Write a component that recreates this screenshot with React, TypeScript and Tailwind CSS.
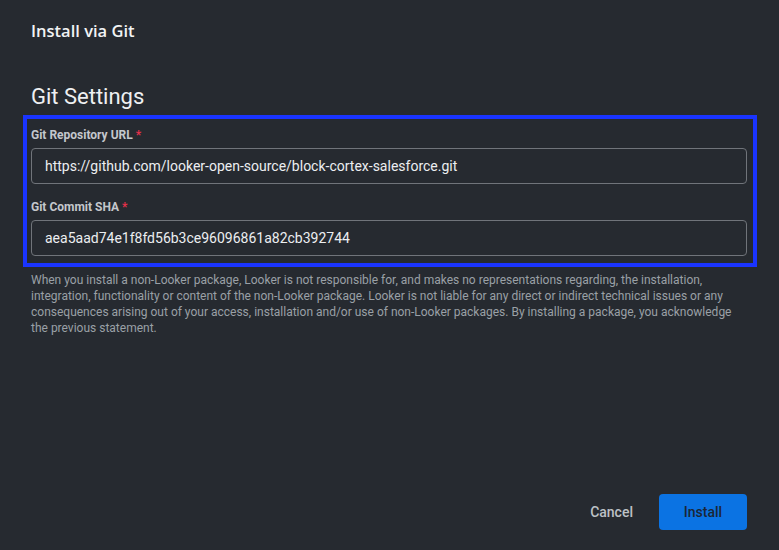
import React from 'react';

const FONT = { fontFamily: 'Roboto, "Open Sans", Arial, sans-serif' };

function Field({ label, value }: { label: string; value: string }) {
    return (
        <div className="flex flex-col">
            <label className="text-[12px] leading-[16px] font-bold text-[#c4c7cc] mb-[5px]">
                {label} <span className="text-[#e5304a]">*</span>
            </label>
            <div className="h-[36px] flex items-center rounded-[4px] border border-[#70747a] px-[13px] text-[14px] text-[#eceef1]">
                {value}
            </div>
        </div>
    );
}

export default function App() {
    return (
        <div style={FONT} className="w-[779px] h-[550px] bg-[#262a30] flex flex-col px-[31px] pr-[32px] pt-[19px] pb-[20px] overflow-hidden">
            {/* --- Title --- */}
            <h1 className="font-['Open_Sans',sans-serif] text-[16.5px] leading-[24px] font-semibold text-[#f1f3f4]">Install via Git</h1>

            <h2 className="mt-[40px] text-[22px] leading-[28px] text-[#eef0f2]">Git Settings</h2>

            {/* --- Highlighted fields --- */}
            <div className="mt-[4px] -ml-[8px] -mr-[10px] border-4 border-[#1a34ff] pl-[4px] pr-[6px] pt-[8px] pb-[7px] flex flex-col gap-[15px]">
                <Field label="Git Repository URL" value="https://github.com/looker-open-source/block-cortex-salesforce.git" />
                <Field label="Git Commit SHA" value="aea5aad74e1f8fd56b3ce96096861a82cb392744" />
            </div>

            {/* --- Disclaimer --- */}
            <p className="mt-[5px] text-[12px] leading-[16px] text-[#9aa0a6]">
                When you install a non-Looker package, Looker is not responsible for, and makes no representations regarding, the installation,
                integration, functionality or content of the non-Looker package. Looker is not liable for any direct or indirect technical issues or any
                consequences arising out of your access, installation and/or use of non-Looker packages. By installing a package, you acknowledge
                the previous statement.
            </p>

            {/* --- Footer --- */}
            <div className="mt-auto flex items-center justify-end gap-[10px]">
                <button className="h-[36px] px-[16px] text-[14px] font-medium text-[#bdc1c6]">Cancel</button>
                <button className="h-[36px] w-[88px] rounded-[4px] bg-[#0b73e3] text-[14px] font-medium text-[#1b2636]">Install</button>
            </div>
        </div>
    );
}
